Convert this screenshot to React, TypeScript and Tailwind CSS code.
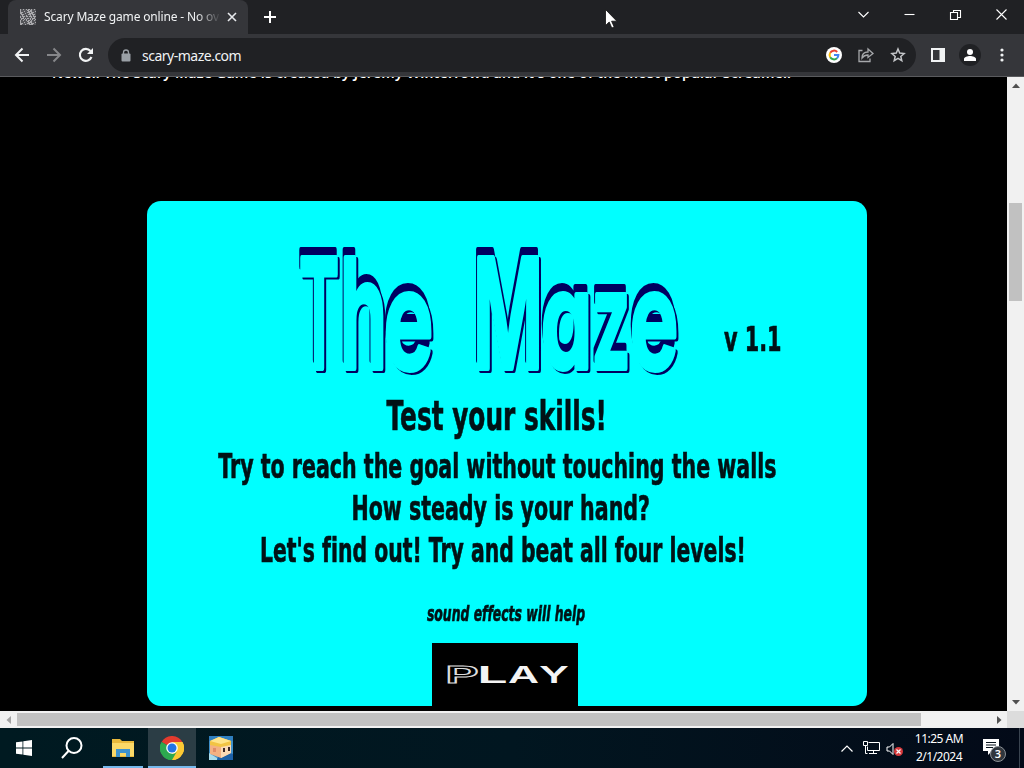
import type { ReactNode } from 'react';

const UI_FONT = "font-['Noto_Sans','Liberation_Sans',sans-serif]";

export default function App() {
  return (
    <div className={`relative flex h-[768px] w-[1024px] flex-col overflow-hidden bg-black ${UI_FONT}`}>
      <TabStrip />
      <Toolbar />
      <div className="flex h-[635px] border-t border-[#5a5b5e]">
        <GamePage />
        <VerticalScrollbar />
      </div>
      <HorizontalScrollbar />
      <Taskbar />
      <MouseCursor />
    </div>
  );
}

function TabStrip() {
  return (
    <div className="flex h-[34px] shrink-0 bg-[#202124]">
      <div className="ml-2 flex w-[240px] items-center rounded-t-lg bg-[#35363a] pl-3 pr-[9px]">
        <MazeFavicon />
        <span className="ml-[8px] w-[177px] shrink-0 overflow-hidden whitespace-nowrap text-[12px] tracking-[-0.15px] text-[#f1f3f4] [mask-image:linear-gradient(to_right,black_86%,transparent)]">
          Scary Maze game online - No ov
        </span>
        <svg className="ml-[6px] shrink-0" width="10" height="10" viewBox="0 0 10 10" stroke="#e8eaed" strokeWidth="1.6">
          <path d="M1 1l8 8M9 1L1 9" />
        </svg>
      </div>
      <svg className="ml-[16px] mt-[11px]" width="12" height="12" viewBox="0 0 12 12" stroke="#fff" strokeWidth="2">
        <path d="M6 0v12M0 6h12" />
      </svg>
      <div className="ml-auto flex h-[29px] items-center text-white">
        <WindowButton>
          <path d="M1.500 4l5 5 5-5" />
        </WindowButton>
        <WindowButton>
          <path d="M1.500 6.500h10" />
        </WindowButton>
        <WindowButton>
          <path d="M1.500 4.500h7v7h-7zM4.500 4.500v-2h7v7h-3" />
        </WindowButton>
        <WindowButton>
          <path d="M1.500 1.500l10 10M11.500 1.500l-10 10" />
        </WindowButton>
      </div>
    </div>
  );
}

function WindowButton({ children }: { children: ReactNode }) {
  return (
    <div className="flex w-[46px] justify-center">
      <svg width="13" height="13" viewBox="0 0 13 13" fill="none" stroke="currentColor" strokeWidth="1.1">
        {children}
      </svg>
    </div>
  );
}

function MazeFavicon() {
  const cells = Array.from({ length: 256 }, (_, i) => i).filter(i => (i * i * 7 + i * 13 + (i >> 4) * 5) % 11 < 5);
  return (
    <svg className="shrink-0" width="16" height="16" viewBox="0 0 16 16">
      <rect width="16" height="16" fill="#55565a" />
      {cells.map(i => (
        <rect key={i} x={i % 16} y={i >> 4} width="1" height="1" fill="#a9a9ac" />
      ))}
    </svg>
  );
}

function Toolbar() {
  return (
    <div className="flex h-[42px] shrink-0 items-center bg-[#35363a]">
      <svg className="ml-[14px]" width="16" height="16" viewBox="0 0 16 16" fill="none" stroke="#f1f3f4" strokeWidth="2">
        <path d="M15 8H2M8.500 1.500L2 8l6.500 6.500" />
      </svg>
      <svg className="ml-[16px]" width="16" height="16" viewBox="0 0 16 16" fill="none" stroke="#86878a" strokeWidth="2">
        <path d="M1 8h13M7.500 1.500L14 8l-6.500 6.500" />
      </svg>
      <svg className="ml-[16px]" width="16" height="16" viewBox="0 0 16 16" fill="none" stroke="#f1f3f4" strokeWidth="2.100">
        <path d="M13.500 10A6 6 0 1 1 12.500 4" />
        <path d="M15 1v6H9z" fill="#f1f3f4" stroke="none" />
      </svg>
      <div className="ml-[14px] flex h-[34px] w-[808px] items-center rounded-full bg-[#202124] pl-[13px] pr-2.5">
        <svg width="10" height="13" viewBox="0 0 10 13">
          <rect x="0.500" y="4.500" width="9" height="8" rx="1" fill="#9aa0a6" />
          <path d="M2.500 5V3.500a2.500 2.500 0 0 1 5 0V5" fill="none" stroke="#9aa0a6" strokeWidth="1.300" />
        </svg>
        <span className="ml-[11px] text-[14px] tracking-[-0.5px] text-[#f1f3f4]">scary-maze.com</span>
        <div className="ml-auto flex items-center">
          <GoogleIcon />
          <svg className="ml-[16px]" width="16" height="16" viewBox="0 0 16 16" fill="none" stroke="#a6a8ab" strokeWidth="1.300">
            <path d="M4.500 3.500H1v11h11v-3M4 11c0-4 2-6 6-6V2l5 4.500-5 4V8c-3 0-4.500 1-6 3z" />
          </svg>
          <svg className="ml-[16px]" width="16" height="16" viewBox="0 0 16 16" fill="none" stroke="#c4c6c9" strokeWidth="1.500">
            <path d="M8 2l1.700 4.100 4.400.4-3.300 2.900 1 4.300L8 11.400l-3.800 2.300 1-4.300-3.300-2.900 4.400-.4z" />
          </svg>
        </div>
      </div>
      <svg className="ml-[15px]" width="14" height="14" viewBox="0 0 14 14">
        <path d="M0 0h14v14H0zM2 2v10h6.500V2z" fill="#f1f3f4" fillRule="evenodd" />
      </svg>
      <div className="ml-[14px] flex size-[22px] items-center justify-center rounded-full bg-[#202124]">
        <svg width="12" height="12" viewBox="0 0 12 12" fill="#fff">
          <circle cx="6" cy="3" r="3" />
          <path d="M0 12V10c0-2 3.500-3 6-3s6 1 6 3v2z" />
        </svg>
      </div>
      <svg className="ml-[19px]" width="4" height="14" viewBox="0 0 4 14" fill="#f1f3f4">
        <circle cx="2" cy="2" r="1.600" />
        <circle cx="2" cy="7" r="1.600" />
        <circle cx="2" cy="12" r="1.600" />
      </svg>
    </div>
  );
}

function GoogleIcon() {
  return (
    <svg width="16" height="16" viewBox="0 0 16 16" fill="none" strokeWidth="2">
      <circle cx="8" cy="8" r="8" fill="#fff" />
      <path d="M4.200 5.800A4.400 4.400 0 0 1 11.200 5" stroke="#ea4335" />
      <path d="M4.200 10.200a4.400 4.400 0 0 1 0-4.400" stroke="#fbbc05" />
      <path d="M11 11.200a4.400 4.400 0 0 1-6.800-1" stroke="#34a853" />
      <path d="M8 8h4.400a4.400 4.400 0 0 1-1.400 3.200" stroke="#4285f4" />
    </svg>
  );
}

function GamePage() {
  return (
    <div className="flex w-[1007px] flex-col overflow-hidden bg-black">
      <div className="h-[124px] w-full shrink-0 overflow-hidden pl-[52px]">
        <p className="-mt-[15px] whitespace-nowrap text-[14px] font-semibold leading-[22px] tracking-[0.23px] text-white">
          Newer. The Scary Maze Game is created by Jeremy Winterrowd and it's one of the most popular Screamer.
        </p>
      </div>
      <div className="ml-[147px] flex h-[505px] w-[720px] shrink-0 flex-col items-center overflow-hidden rounded-[14px] bg-[#00ffff] font-['DejaVu_Sans',sans-serif] text-[#001216]">
        <div className="flex h-[190px] w-full shrink-0">
          <MazeTitle />
          <Squeezed className="mt-[117px] w-[56px] text-[33px] leading-[44px]" scale="scale-x-[0.63]">v 1.1</Squeezed>
        </div>
        <Squeezed className="w-[720px] -translate-x-[10px] text-[40px] leading-[50px]" scale="scale-x-[0.62]">Test your skills!</Squeezed>
        <Squeezed className="mt-[4px] w-[720px] -translate-x-[10px] text-[34px] leading-[42px]" scale="scale-x-[0.605]">
          Try to reach the goal without touching the walls
        </Squeezed>
        <Squeezed className="w-[720px] -translate-x-[6px] text-[34px] leading-[42px]" scale="scale-x-[0.605]">How steady is your hand?</Squeezed>
        <Squeezed className="w-[720px] -translate-x-[4px] text-[34px] leading-[43px]" scale="scale-x-[0.6]">
          Let's find out! Try and beat all four levels!
        </Squeezed>
        <Squeezed className="mt-[27px] w-[720px] -translate-x-[1px] text-[21px] italic leading-[30px]" scale="scale-x-[0.59]">sound effects will help</Squeezed>
        <button className="mt-[14px] flex h-[63px] w-[146px] shrink-0 -translate-x-[2px] justify-center bg-black">
          <PlayLabel />
        </button>
      </div>
    </div>
  );
}

function Squeezed({ children, className, scale }: { children: ReactNode; className: string; scale: string }) {
  return (
    <div className={`flex shrink-0 justify-center whitespace-nowrap font-bold [-webkit-text-stroke:0.7px_#001216] [font-variant-ligatures:none] ${className}`}>
      <span className={scale}>{children}</span>
    </div>
  );
}

// Embossed lettering: two navy copies peek out from behind a cyan one
function MazeTitle() {
  return (
    <svg
      className="ml-[143px] mt-[39px] shrink-0"
      width="435"
      height="140"
      viewBox="290 240 435 140"
      fontFamily="Inter, sans-serif"
      fontWeight="600"
      strokeWidth="6"
      strokeLinejoin="round"
    >
      <defs>
        <text id="maze-title" y="367.500" fontSize="151">
          <tspan x="299" textLength="40" lengthAdjust="spacingAndGlyphs">T</tspan>
          <tspan x="340" textLength="47" lengthAdjust="spacingAndGlyphs">h</tspan>
          <tspan x="384" fontSize="134" textLength="49" lengthAdjust="spacingAndGlyphs">e</tspan>
          <tspan x="473" textLength="70" lengthAdjust="spacingAndGlyphs">M</tspan>
          <tspan x="541" fontSize="134" textLength="51" lengthAdjust="spacingAndGlyphs" className="[font-feature-settings:'cv11']">a</tspan>
          <tspan x="592" fontSize="134" textLength="38" lengthAdjust="spacingAndGlyphs">z</tspan>
          <tspan x="630" fontSize="134" textLength="48" lengthAdjust="spacingAndGlyphs">e</tspan>
        </text>
      </defs>
      <use href="#maze-title" x="-1" y="-8" fill="#000060" stroke="#000060" />
      <use href="#maze-title" x="2" y="2" fill="#000060" stroke="#000060" />
      <use href="#maze-title" fill="#00ffff" stroke="#00ffff" />
    </svg>
  );
}

function PlayLabel() {
  return (
    <svg width="146" height="63" viewBox="0 0 146 63" fontFamily="Inter, sans-serif" fontWeight="600" fontSize="23" fill="#f4f4f4">
      <text y="40">
        <tspan x="13" textLength="34" lengthAdjust="spacingAndGlyphs" fill="#000" stroke="#ddd" strokeWidth="1">P</tspan>
        <tspan x="45" textLength="31" lengthAdjust="spacingAndGlyphs">L</tspan>
        <tspan x="76" textLength="31" lengthAdjust="spacingAndGlyphs">A</tspan>
        <tspan x="107" textLength="30" lengthAdjust="spacingAndGlyphs">Y</tspan>
      </text>
    </svg>
  );
}

function VerticalScrollbar() {
  return (
    <div className="flex w-[17px] flex-col items-center bg-[#f1f1f1]">
      <svg className="mt-[6px]" width="8" height="5" viewBox="0 0 8 5" fill="#505050">
        <path d="M0 5l4-4.500L8 5z" />
      </svg>
      <div className="mt-[115px] h-[98px] w-[13px] bg-[#c1c1c1]" />
      <svg className="mb-[6px] mt-auto" width="8" height="5" viewBox="0 0 8 5" fill="#505050">
        <path d="M0 0l4 4.500L8 0z" />
      </svg>
    </div>
  );
}

function HorizontalScrollbar() {
  return (
    <div className="flex h-[17px] shrink-0 items-center bg-[#f1f1f1]">
      <svg className="ml-[6px]" width="5" height="8" viewBox="0 0 5 8" fill="#a3a3a3">
        <path d="M5 0L.5 4 5 8z" />
      </svg>
      <div className="ml-[6px] h-[13px] w-[904px] bg-[#c1c1c1]" />
      <svg className="ml-[76px]" width="5" height="8" viewBox="0 0 5 8" fill="#505050">
        <path d="M0 0l4.500 4L0 8z" />
      </svg>
      <div className="ml-auto h-[17px] w-[17px] bg-[#dcdcdc]" />
    </div>
  );
}

function Taskbar() {
  return (
    <div className="flex h-[40px] shrink-0 bg-gradient-to-r from-[#001a21] via-[#011620] to-[#030a18] text-white">
      <div className="flex w-[48px] items-center justify-center">
        <svg width="16" height="16" viewBox="0 0 16 16" fill="#fff">
          <path d="M0 2.300L6.500 1.400v6.200H0zM7.300 1.300L16 0v7.600H7.300zM0 8.400h6.500v6.200L0 13.700zM7.300 8.400H16V16l-8.700-1.300z" />
        </svg>
      </div>
      <div className="flex w-[48px] items-center justify-center">
        <svg width="24" height="24" viewBox="0 0 24 24" fill="none" stroke="#fff" strokeWidth="2">
          <circle cx="14" cy="9.500" r="7.500" />
          <path d="M8.500 15L2 22" />
        </svg>
      </div>
      <div className="ml-[7px] flex w-[40px] items-center justify-center border-b-2 border-[#76b9ed] pt-0.5">
        <FolderIcon />
      </div>
      <div className="ml-[5px] flex w-[48px] items-center justify-center border-b-2 border-[#76b9ed] bg-[#2b3d45] pt-0.5">
        <ChromeIcon />
      </div>
      <div className="flex w-[50px] items-center justify-center">
        <CubeFaceIcon />
      </div>
      <div className="ml-auto flex items-center">
        <svg width="12" height="7" viewBox="0 0 12 7" fill="none" stroke="#fff" strokeWidth="1.200">
          <path d="M.5 6.500L6 1l5.500 5.500" />
        </svg>
        <svg className="ml-[10px]" width="17" height="14" viewBox="0 0 17 14" fill="none" stroke="#fff">
          <path d="M5.500 1.500h11v8h-12v-4M10.500 9.500v3M6 12.500h8M.5.500h4v4h-4zM2.500 4.500v8h2" />
        </svg>
        <svg className="ml-[6px] mt-[2px]" width="18" height="15" viewBox="0 0 18 15" fill="none">
          <path d="M1 5h2.500L7 1.500v11L3.500 9H1z" stroke="#fff" />
          <circle cx="12.500" cy="9.500" r="4.500" fill="#d6393c" />
          <path d="M10.500 7.500l4 4M14.500 7.500l-4 4" stroke="#fff" strokeWidth="1.200" />
        </svg>
        <div className="ml-[7px] flex w-[56px] flex-col items-center whitespace-nowrap text-[12px] leading-[18px] tracking-[-0.5px]">
          <span>11:25 AM</span>
          <span>2/1/2024</span>
        </div>
        <ActionCenterIcon />
        <div className="ml-[12px] mr-[4px] h-[40px] w-px bg-[#3a4450]" />
      </div>
    </div>
  );
}

function FolderIcon() {
  return (
    <svg width="22" height="20" viewBox="0 0 22 20">
      <path d="M0 1h8l2 2h12v16H0z" fill="#e9b93c" />
      <path d="M0 5h22v13H0z" fill="#fbd968" />
      <path d="M4 11h14v8h-4v-4H8v4H4z" fill="#3e93cf" />
    </svg>
  );
}

function ChromeIcon() {
  return (
    <svg width="24" height="24" viewBox="0 0 24 24">
      <path d="M12 12L1.600 6A12 12 0 0 1 22.400 6z" fill="#e33b2e" />
      <path d="M12 12L22.400 6A12 12 0 0 1 12 24z" fill="#fcc934" />
      <path d="M12 12v12A12 12 0 0 1 1.600 6z" fill="#2da94f" />
      <path d="M12 6h10.400A12 12 0 0 1 12 24l5.200-9z" fill="#fcc934" />
      <path d="M1.600 6l5.200 9A6 6 0 0 0 17.200 15L12 24A12 12 0 0 1 1.600 6z" fill="#2da94f" />
      <circle cx="12" cy="12" r="5.800" fill="#fff" />
      <circle cx="12" cy="12" r="4.500" fill="#2474e5" />
    </svg>
  );
}

function CubeFaceIcon() {
  return (
    <svg width="24" height="24" viewBox="0 0 24 24">
      <rect width="24" height="24" fill="#3f8fc8" />
      <path d="M0 0h24v5H0z" fill="#2f7fc0" />
      <path d="M0 17l8 5v2H0z" fill="#a9dcec" />
      <path d="M12 14l12 4v6H8z" fill="#1d61a8" />
      <path d="M1 6l9-5 12 4v12l-10 5L1 18z" fill="#f3b183" />
      <path d="M12 9l10-3v11l-10 5z" fill="#fbd9b4" />
      <path d="M1 5l9-4 12 4v4l-10 2L1 9z" fill="#f2c444" />
      <path d="M1 5l9-4 12 4-10 3z" fill="#ffe48a" />
      <path d="M14 12h2v4h-2zM19 11h2v4h-2z" fill="#3b2626" />
      <path d="M4 12h3v4H4z" fill="#e08c68" />
    </svg>
  );
}

function ActionCenterIcon() {
  return (
    <div className="relative ml-[16px] h-[24px] w-[24px]">
      <svg className="mt-[3px]" width="17" height="17" viewBox="0 0 17 17">
        <path d="M0 0h16v12H9l-4 4v-4H0z" fill="#fff" />
        <path d="M3 3.500h10M3 6h10M3 8.500h7" stroke="#07121c" />
      </svg>
      <span className="absolute left-[7px] top-[10px] flex size-[16px] items-center justify-center rounded-full border border-[#8b9096] bg-[#30363d] text-[11px] font-semibold">
        3
      </span>
    </div>
  );
}

function MouseCursor() {
  return (
    <svg className="absolute left-[605px] top-[9px]" width="13" height="20" viewBox="0 0 13 20">
      <path d="M.5.500v16l3.700-3.500 2.600 6 2.400-1-2.600-5.800h5.300z" fill="#fff" stroke="#111" strokeWidth="0.800" />
    </svg>
  );
}
